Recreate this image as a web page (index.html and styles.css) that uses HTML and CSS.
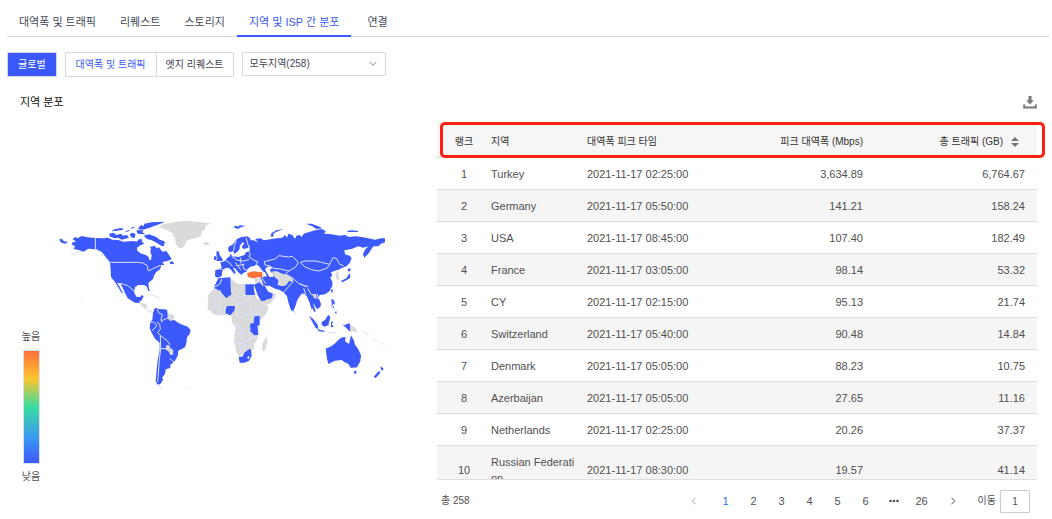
FILE: index.html
```html
<!DOCTYPE html>
<html lang="ko">
<head>
<meta charset="utf-8">
<title>지역 및 ISP 간 분포</title>
<link rel="stylesheet" href="styles.css">
</head>
<body>
<nav class="tabs">
  <a class="tab" href="#">대역폭 및 트래픽</a>
  <a class="tab" href="#">리퀘스트</a>
  <a class="tab" href="#">스토리지</a>
  <a class="tab tab-active" href="#">지역 및 ISP 간 분포</a>
  <a class="tab" href="#">연결</a>
</nav>
<div class="filters">
  <button class="btn btn-primary" type="button">글로벌</button>
  <div class="segment">
    <button class="btn segment-on" type="button">대역폭 및 트래픽</button>
    <button class="btn" type="button">엣지 리퀘스트</button>
  </div>
  <div class="select-box">
    <select class="select" aria-label="지역 선택"><option>모두지역(258)</option></select>
    <svg class="select-arrow" viewBox="0 0 8 6" aria-hidden="true"><path d="M.7 1 4 4.4 7.3 1"/></svg>
  </div>
</div>
<header class="heading">
  <h1 class="title">지역 분포</h1>
  <button class="download" type="button" aria-label="다운로드">
    <svg class="download-icon" viewBox="0 0 14 14" aria-hidden="true"><path class="download-arrow" d="M5.500 1h3v4.200h2.300L7 9.400 3.200 5.200h2.300z"/><path class="download-tray" d="M1.200 9.500v3h11.600v-3"/></svg>
  </button>
</header>
<main class="content">
  <section class="map-panel" aria-label="지역 분포 지도">
    <div class="legend">
      <span>높음</span>
      <div class="legend-bar"></div>
      <span>낮음</span>
    </div>
    <svg class="map" viewBox="165 645 1005 540" role="img" aria-label="세계 지도">
      <g transform="translate(165 645)">
        <path class="land-off" d="M312 36 322 28 345 24 372 19 400 18 430 21 468 25 452 32 450 42 440 50 438 62 424 68 408 72 394 78 390 90 382 100 370 98 362 86 360 70 352 54 334 44zM443 84l14-3 8 3-5 5-11 2z"/>
        <path class="land-on" d="M14 71 22 73 26 79 39 80 31 86 21 84 14 77zM52 82 63 80 53 72 60 66 68 70 80 63 98 67 120 69 145 70 158 68 172 74 190 75 205 80 235 78 245 80 252 73 260 72 262 82 268 86 258 90 246 98 246 106 256 115 272 120 280 125 284 136 288 135 290 120 286 112 288 100 284 96 300 92 304 100 312 97 322 110 334 108 342 120 350 132 340 137 322 141 328 150 318 150 316 162 303 172 298 180 294 192 280 204 282 222 285 228 280 228 276 216 268 210 250 210 240 216 237 232 244 245 256 246 260 240 266 243 260 256 250 262 238 262 218 250 212 238 198 208 188 205 204 234 200 234 182 204 168 186 166 150 164 140 152 126 140 110 120 103 100 101 86 110 78 108 74 106 56 102 60 94 50 88z"/>
        <path class="land-on" d="M163 56 176 53 184 60 198 56 204 62 216 60 222 68 200 74 190 68 178 70 164 64zM176 43 200 39 206 44 180 48zM224 57 234 53 242 58 238 70 228 66zM244 46 266 46 262 52 272 58 248 56zM250 40 258 30 266 34 268 26 290 22 330 20 312 28 290 36 272 42 262 44 248 42zM266 62 282 58 304 66 314 74 326 78 332 84 326 86 328 94 318 92 306 84 290 76 276 72zM344 142 352 138 358 146 346 148z"/>
        <path class="coast" d="M48 122 62 116 74 108M284 238 300 243 315 250"/>
        <path class="coast-on" d="M172 48l10-4M212 50l12-4M228 40l10-3"/>
        <path class="coast" d="M78 248h4"/>
        <path class="land-off" d="M250 263 262 265 274 266 276 280 270 282 260 272z"/>
        <path class="border" d="M121 68v34l12 6 12 16M166 142h82l16 2 12 7 4 17 18-9 18-8M187 205l15 1 6 3 9 2 6 5 8 6 5 7"/>
        <path class="land-on" d="M480 125 486 126 484 134 478 134zM488 110 493 112 493 122 504 134 500 138 486 138 490 130 486 122z"/>
      </g>
      <g transform="translate(165 900)">
        <path class="coast-off" d="M262 14 272 20M276 30l10 5 6 2"/>
        <path class="land-on" d="M300 24 310 28 325 28 336 30 338 40 338 55 345 62 358 60 366 66 382 74 398 80 407 90 404 102 396 112 394 130 390 142 370 152 368 168 360 182 352 190 346 194 346 204 332 208 330 222 322 232 324 240 316 252 308 254 302 244 304 220 308 180 314 150 314 128 300 116 290 98 284 84 286 66 292 60 294 38zM230 2 240 8 256 8 250 2z"/>
        <path class="land-on" d="M300 26h10v6h-10zM298 26l10-1 8 4h20v3l-10 2-16-2-12 2z"/>
        <path class="coast" d="M304 250 312 260 322 264M401 262h6"/>
        <path class="land-off" d="M338 38 348 42 358 46 358 56 346 62 340 56zM334 136 342 135 346 144 355 150 354 164 346 165 342 156 332 148z"/>
        <path class="border" d="M307 26 311 39 322 43 318 58 320 67M320 62 334 56 340 54M286 68 295 66 306 75 299 85 291 92M306 66 314 72 316 88 308 98 318 108 336 122 346 134M316 108 317 146 334 146M317 146 313 180 308 246M344 176 352 182 358 186"/>
      </g>
      <g transform="translate(615 645)">
        <path class="land-off" d="M76 190 84 196 96 206 108 208 121 206 121 240 150 240 160 256 174 272 190 270 186 286 8 286 10 240 26 220 44 230 64 250 80 238zM168 258 200 250 206 234 214 238 208 252 194 266 172 272zM148 190 168 188 166 202 150 208z"/>
        <path class="land-on" d="M35 108 42 110 42 118 52 132 48 138 34 138 38 128 34 120zM28 124 34 124 32 134 26 134zM31 165 46 163 50 158 46 142 60 138 66 130 74 124 76 116 82 124 100 126 118 120 128 118 150 140 150 152 136 156 128 162 124 170 114 174 110 180 100 172 90 160 84 158 92 172 88 178 78 164 70 158 60 160 52 168 50 184 38 188 30 184zM70 108 70 96 84 88 96 72 110 66 126 64 136 70 136 86 132 98 116 102 110 96 118 84 112 82 104 94 104 102 96 112 88 116 84 108 76 112z"/>
        <path class="land-on" d="M118 126 122 112 134 108 134 98 134 76 146 76 160 82 150 72 166 70 178 76 200 72 215 70 232 68 240 60 246 68 250 56 262 60 270 72 274 62 284 60 290 66 296 56 310 52 330 46 350 42 362 48 358 56 380 58 404 62 420 60 432 66 450 64 470 66 490 70 510 74 528 70 540 70 540 82 528 86 520 94 505 94 498 104 490 116 478 128 474 118 480 104 490 94 474 98 460 94 440 102 418 106 420 118 434 122 440 130 434 144 424 154 412 158 400 164 388 168 378 172 382 180 376 188 382 200 382 212 374 228 360 238 344 240 338 250 346 262 346 276 336 282 328 270 324 264 320 284 314 262 308 248 300 236 290 236 280 250 270 264 266 286 258 286 250 262 246 244 236 232 222 224 212 222 196 214 180 206 178 196 186 184 180 172 170 168 166 158 158 150 148 150zM147 210 166 200 180 214 190 230 204 236 200 250 178 256 168 258 158 240zM166 186 186 184 190 214 176 210z"/>
        <path class="sea" d="M128 164 136 156 148 153 152 158 160 156 174 168 172 173 150 171 130 173zM186 174 180 162 190 154 202 158 194 166 204 178 204 186 194 186z"/>
        <path class="land-off" d="M200 170 214 168 232 176 250 180 262 190 266 202 252 198 244 210 232 214 218 210 220 196 206 184zM390 176 402 166 400 180 404 194 396 194zM322 240 332 238 336 252 328 250z"/>
        <path class="land-on" d="M26 218 40 190 76 187 78 230 80 238 64 250 44 228zM121 208 148 208 146 216 150 240 121 240zM64 274H86L92 286H62zM428 163 434 160 438 166 430 170zM434 174 436 188 424 196 412 202 408 198 424 190zM380 222 384 224 382 234 378 230zM380 252 386 256 384 270 388 280 380 276zM85 36 92 32 100 35 104 31 122 32 108 37 98 42zM196 64 200 54 214 46 236 42 220 48 206 55 204 66zM303 26 320 26 340 34 352 40 334 42 322 34zM425 48 440 46 460 48 458 51 430 51z"/>
        <path class="turkey" d="M126 176 134 171 148 169 162 171 171 170 173 182 170 187 158 187 146 190 130 187z"/>
        <path class="border" d="M94 78 88 92 86 108M123 68 128 84 132 100M126 106 136 116 132 126 148 136 158 140 152 152M80 124 98 136 116 138 132 134M62 136 74 144 82 154M48 163 62 166M92 142 96 152 118 148M112 148 118 164 128 166M98 152 108 166M106 128 108 146M178 140 210 132 222 122 250 126 262 124 280 142 272 156 252 168 226 162 206 160 192 152 180 150zM286 142 300 138 330 138 350 142 374 148 366 160 340 168 320 164 300 156zM374 148 384 128 394 130 404 148 416 152M252 168 242 176 250 184M250 182 264 190 282 206 298 212 310 214M236 232 248 218 262 202M286 206 304 216M296 220 302 236M308 220 318 238 334 240M336 236 340 250M160 196 174 212 166 202M26 218 46 206 50 192M82 236 108 248 121 240M98 248 92 264 100 285M121 238 112 270M12 248H40L44 270M150 252 136 270 114 272M62 250 46 266H28M182 206 172 190 176 176M46 226 46 250"/>
      </g>
      <g transform="translate(615 900)">
        <path class="land-off" d="M8 5 10 -2H166L172 14 182 26 192 24 184 40 166 60 160 72 160 104 158 118 148 130 146 148 138 152 118 158 102 170 94 156 88 128 88 104 92 84 80 66 80 48 64 44 50 46 38 46 24 42 10 22zM184 110 188 122 180 152 172 154 172 130zM167 3 184 8 204 -5 200 -1 172 12zM269 32l5 7-3 4z"/>
        <path class="land-on" d="M66 18 90 18 88 32 76 46 62 40 62 28zM148 49 164 48 164 76 156 78 146 68zM138 70 148 70 158 80 160 104 148 106 136 94 134 80zM101 170 112 170 118 158 132 148 138 148 140 168 132 182 118 188 104 188zM167 -5 184 -6 180 2 168 3zM250 -10H280L272 16 264 36 256 18zM308 -8 318 -6 326 0 342 -4 348 14 338 28 334 18 324 10 332 34 328 36 316 14zM378 -3 384 10 390 14 388 2zM388 36 395 34 394 42zM312 47 324 56 338 74 340 88 332 84zM338 88 358 92 358 96 340 93zM350 66 360 60 370 44 376 52 370 76 358 80 350 74zM378 66 386 64 380 72 386 80 378 82zM410 72 418 76 432 70 436 74 436 96 424 84zM362 146 380 138 392 128 402 118 412 112 422 112 420 124 432 132 438 106 446 120 450 134 460 148 468 166 466 184 456 202 438 204 430 192 418 186 410 180 390 182 370 192 366 176zM447 213h8l-2 8h-5zM526 198 536 206 530 214zM522 212 526 218 512 234 506 230z"/>
        <path class="land-off" d="M436 76 450 82 460 100 446 94 436 96z"/>
        <path class="sea" d="M127 171l6-3 0 6-4 4z"/>
        <path class="coast" d="M362 96 392 99M380 29l4-16M472 91l19 16M503 116l12 8M530 130l9 3"/>
        <path class="border" d="M30 0 33 18 19 28M43 -7 41 22 49 45M62 21 55 46M89 17 105 8 125 14 139 24 134 47 116 46 102 54M104 9 92 25 98 49M124 14 136 -14M146 21 172 25 156 45M137 23 146 40 148 49M84 74 103 77 108 97 131 100 136 82M87 100H109V115L128 120 142 110M108 128V160M88 129H117L132 116 158 111M118 130 128 139 141 127M118 130V156"/>
      </g>
    </svg>
  </section>
  <section class="table-panel">
    <div class="table-scroll">
      <table class="table">
        <colgroup><col class="col-rank"><col class="col-region"><col class="col-time"><col class="col-peak"><col class="col-total"></colgroup>
        <thead><tr><th class="rank">랭크</th><th>지역</th><th>대역폭 피크 타임</th><th class="num">피크 대역폭 (Mbps)</th><th class="num"><button class="sort" type="button">총 트래픽 (GB)<svg class="sort-icon" viewBox="0 0 8 10" aria-hidden="true"><path d="M0 4 4 0 8 4zM0 6h8L4 10z"/></svg></button></th></tr></thead>
        <tbody>
          <tr><td class="rank">1</td><td>Turkey</td><td>2021-11-17 02:25:00</td><td class="num">3,634.89</td><td class="num">6,764.67</td></tr>
          <tr><td class="rank">2</td><td>Germany</td><td>2021-11-17 05:50:00</td><td class="num">141.21</td><td class="num">158.24</td></tr>
          <tr><td class="rank">3</td><td>USA</td><td>2021-11-17 08:45:00</td><td class="num">107.40</td><td class="num">182.49</td></tr>
          <tr><td class="rank">4</td><td>France</td><td>2021-11-17 03:05:00</td><td class="num">98.14</td><td class="num">53.32</td></tr>
          <tr><td class="rank">5</td><td>CY</td><td>2021-11-17 02:15:00</td><td class="num">95.13</td><td class="num">21.74</td></tr>
          <tr><td class="rank">6</td><td>Switzerland</td><td>2021-11-17 05:40:00</td><td class="num">90.48</td><td class="num">14.84</td></tr>
          <tr><td class="rank">7</td><td>Denmark</td><td>2021-11-17 05:05:00</td><td class="num">88.23</td><td class="num">10.75</td></tr>
          <tr><td class="rank">8</td><td>Azerbaijan</td><td>2021-11-17 05:05:00</td><td class="num">27.65</td><td class="num">11.16</td></tr>
          <tr><td class="rank">9</td><td>Netherlands</td><td>2021-11-17 02:25:00</td><td class="num">20.26</td><td class="num">37.37</td></tr>
          <tr><td class="rank">10</td><td>Russian Federation</td><td>2021-11-17 08:30:00</td><td class="num">19.57</td><td class="num">41.14</td></tr>
        </tbody>
      </table>
    </div>
    <div class="header-mark"></div>
    <footer class="footer">
      <span>총 258</span>
      <nav class="pager" aria-label="페이지">
        <button class="page page-off" type="button" aria-label="이전"><svg class="chevron" viewBox="0 0 6 8"><path d="M4.500 .7 1.300 4l3.200 3.300"/></svg></button>
        <button class="page page-on" type="button">1</button>
        <button class="page" type="button">2</button>
        <button class="page" type="button">3</button>
        <button class="page" type="button">4</button>
        <button class="page" type="button">5</button>
        <button class="page" type="button">6</button>
        <button class="page" type="button" aria-label="더 보기"><svg class="dots" viewBox="0 0 10 4"><circle cx="1.500" cy="2" r="1.300"/><circle cx="5" cy="2" r="1.300"/><circle cx="8.500" cy="2" r="1.300"/></svg></button>
        <button class="page" type="button">26</button>
        <button class="page page-next" type="button" aria-label="다음"><svg class="chevron" viewBox="0 0 6 8"><path d="M1.500 .7 4.700 4 1.500 7.300"/></svg></button>
        <label class="jump">이동<input class="jump-input" type="text" value="1"></label>
      </nav>
    </footer>
  </section>
</main>
</body>
</html>
```
FILE: styles.css
```css
* { box-sizing: border-box; }
body {
  margin: 0;
  padding: 8px 0 0 7px;
  background: #fff;
  color: #505050;
  font: 11px/16px "Liberation Sans", "Noto Sans CJK KR", sans-serif;
}
button, input, select { font: inherit; color: inherit; margin: 0; }
button { padding: 0; border: 0; background: none; cursor: pointer; }

.tabs { display: flex; height: 29px; margin-right: 3px; border-bottom: 1px solid #d8d8dc; }
.tab { padding: 6px 12px 0; height: 29px; color: #454a58; text-decoration: none; white-space: nowrap; }
.tab-active { color: #3b59fc; border-bottom: 2px solid #3b59fc; margin-right: 4px; }

.filters { display: flex; gap: 8px; margin-top: 15px; color: #3f4454; font-size: 10px; }
.btn { height: 25px; padding: 0 10px; white-space: nowrap; }
.btn-primary { background: #3b59fc; color: #fff; border: 1px solid #d5d8e8; }
.segment { display: flex; border: 1px solid #d8d8dc; border-radius: 1px; }
.segment .btn { height: 23px; padding: 0 9px; }
.segment .segment-on { padding: 0 10px; color: #3b59fc; }
.segment .btn + .btn { border-left: 1px solid #d8d8dc; }
.select-box { position: relative; width: 144px; height: 24px; }
.select { width: 100%; height: 100%; padding: 0 7px; appearance: none; background: #fff; border: 1px solid #d8d8dc; border-radius: 1px; }
.select-arrow { position: absolute; right: 9px; top: 9px; width: 8px; height: 6px; fill: none; stroke: #858a96; stroke-width: 1; pointer-events: none; }

.heading { display: flex; align-items: center; justify-content: space-between; margin-top: 17px; padding: 0 15px 0 13px; }
.title { margin: 0; font-size: 11px; font-weight: 400; color: #111; }
.download { display: flex; }
.download-icon { width: 14px; height: 14px; }
.download-arrow { fill: #777; }
.download-tray { fill: none; stroke: #777; stroke-width: 2; }

.content { display: flex; margin-top: 12px; }
.map-panel { flex: 1; display: flex; min-width: 0; padding-left: 14px; }
.legend { display: flex; flex-direction: column; align-items: center; gap: 5px; width: 20px; margin-top: 207px; font-size: 10px; white-space: nowrap; }
.legend-bar { width: 17px; height: 114px; border: 1px solid #dde; background: linear-gradient(#ff7038, #fbc62f 25%, #38dda0 50%, #3a9af0 77%, #3b59fc); }
.map { flex: 1; min-width: 0; height: 180px; margin: 93px 47px 0 14px; }
.land-on { fill: #3b59fc; }
.land-off { fill: #dadada; }
.turkey { fill: #ff7038; }
.sea { fill: #fff; }
.border { fill: none; stroke: #dce2ff; stroke-width: 3; }
.coast { fill: none; stroke: #dadff5; stroke-width: 3; }
.coast-on { fill: none; stroke: #3b59fc; stroke-width: 3; }
.coast-off { fill: none; stroke: #dadada; stroke-width: 4; }

.table-panel { position: relative; flex: 0 1 600px; margin-right: 15px; }
.table-scroll { height: 358px; overflow: hidden; border-bottom: 1px solid #dedede; }
.table { width: 100%; border-collapse: separate; border-spacing: 0; table-layout: fixed; }
.col-rank { width: 54px; }
.col-region { width: 96px; }
.col-time { width: 142px; }
.col-peak { width: 134px; }
.table th, .table td { height: 32px; padding: 0; text-align: left; border-bottom: 1px solid #dedede; font-weight: 400; }
.table th { height: 36px; padding-top: 4px; background: #f6f6f6; color: #333; font-size: 10px; }
.table td:nth-child(2) { padding-right: 12px; word-break: break-all; }
.table tbody tr:nth-child(even) { background: #f5f5f5; }
.table tbody tr:last-child td { height: 48px; }
.table .rank { text-align: center; }
.table .num { text-align: right; }
.table .num:last-child { padding-right: 12px; }
.sort { display: inline-flex; align-items: center; gap: 8px; padding-right: 6px; }
.sort-icon { width: 8px; height: 10px; fill: #777; }
.header-mark { position: absolute; top: 0; left: 3px; right: -8px; height: 36px; border: 3px solid #fb2012; border-radius: 5px; pointer-events: none; }

.footer { display: flex; align-items: center; justify-content: space-between; margin-top: 9px; padding: 0 7px 0 4px; font-size: 10px; }
.pager { display: flex; align-items: center; }
.page { display: flex; align-items: center; justify-content: center; width: 28px; height: 24px; font-size: 11px; }
.page-on { color: #2f6bff; }
.page-off { color: #aaa; width: 36px; }
.page-next { width: 34px; }
.chevron { width: 6px; height: 8px; fill: none; stroke: currentColor; stroke-width: 1; }
.dots { width: 10px; height: 4px; fill: currentColor; }
.jump { display: flex; align-items: center; gap: 4px; margin-left: 8px; }
.jump-input { width: 30px; height: 23px; padding: 0; text-align: center; border: 1px solid #ccc; border-radius: 1px; background: #fff; }
```
